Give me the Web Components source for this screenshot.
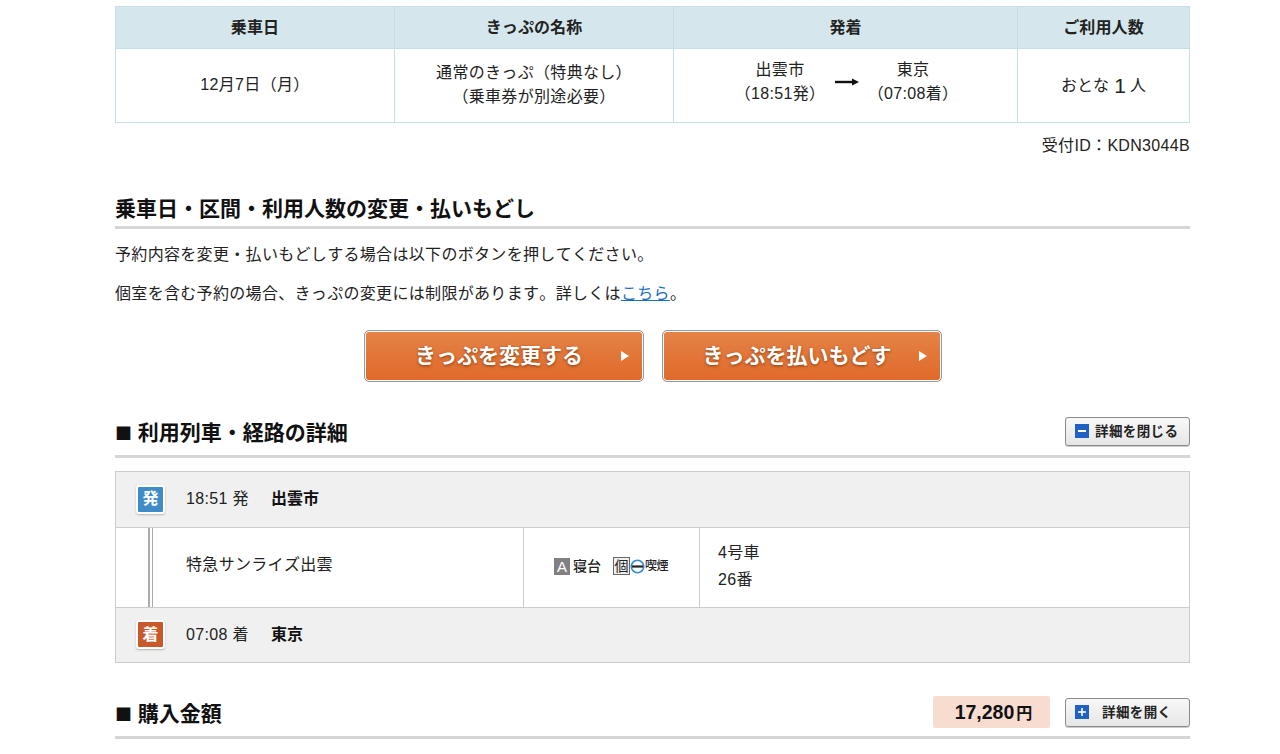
<!DOCTYPE html>
<html lang="ja"><head><meta charset="utf-8"><title>予約内容</title>
<style>
html,body{margin:0;background:#fff;overflow:hidden;height:754px}
body{font-family:"Liberation Sans","Noto Sans CJK JP",sans-serif;color:#222;font-size:16px;font-kerning:none;text-spacing-trim:space-all;letter-spacing:.32px}
</style></head><body>
<rsv-page></rsv-page>
<script>
const FONT='"Liberation Sans","Noto Sans CJK JP",sans-serif';
function el(name,html,css){customElements.define(name,class extends HTMLElement{constructor(){super();this.attachShadow({mode:'open'}).innerHTML=`<style>${css}</style>${typeof html==='function'?html(this):html}`;}
connectedCallback(){if(typeof html==='function'){this.shadowRoot.innerHTML=`<style>${css}</style>${html(this)}`}}});}

el('summary-table',`
<div class="g">
<div class="h">乗車日</div><div class="h">きっぷの名称</div><div class="h">発着</div><div class="h">ご利用人数</div>
<div class="c">12月7日（月）</div>
<div class="c">通常のきっぷ（特典なし）<br>（乗車券が別途必要）</div>
<div class="c route"><div>出雲市<br>（18:51発）</div>
<svg width="24" height="10" viewBox="0 0 24 10"><path d="M0 5H18" stroke="#111" stroke-width="2.4"/><path d="M17 1.5L24 5L17 8.5Z" fill="#111"/></svg>
<div>東京<br>（07:08着）</div></div>
<div class="c ppl">おとな<b>1</b>人</div>
</div>`,`
:host{display:block}
.g{display:grid;grid-template-columns:279px 279px 344px 1fr;grid-template-rows:42px 74px;border:1px solid #c5dfe6;box-sizing:border-box;height:117px}
.h,.c{display:flex;align-items:center;justify-content:center;text-align:center;border-right:1px solid #c5dfe6;box-sizing:border-box}
.g>:nth-child(4n){border-right:0}
.h{background:#d5e7ec;font-weight:700;border-bottom:1px solid #c5dfe6;font-size:16px;color:#222;padding-bottom:4px;letter-spacing:.1px}
.c{line-height:24px;font-size:16px;padding-bottom:2px}
.route{justify-content:flex-start;padding-left:56px;padding-bottom:9px}
.route svg{margin:0 4px 0 5px;flex:none;position:relative;top:0}
.route div{width:100px;white-space:nowrap;display:block}
.ppl{padding-bottom:1px;letter-spacing:.1px}
.ppl b{font-weight:400;font-size:21px;margin:0 4px 0 5px;line-height:20px}
`);

el('section-head',`<div class="w"><div class="t"><slot></slot></div><div class="r"><slot name="right"></slot></div></div>`,`
:host{display:block;border-bottom:3px solid #d6d6d6}
.w{display:flex;align-items:center;justify-content:space-between;height:100%}
:host(.pad) .w{padding-bottom:3px;box-sizing:border-box}
:host(.pad) .r{position:relative;top:-2px}
.t{font-size:21px;font-weight:700;color:#111;line-height:30px;white-space:nowrap;letter-spacing:0;position:relative;top:1px}
:host(.pad) .t{top:0}
.r{display:flex;align-items:center;gap:15px}
`);

el('order-button',`<button><span><slot></slot></span><i></i></button>`,`
:host{display:block}
button{display:flex;align-items:center;justify-content:center;position:relative;width:280px;height:52px;box-sizing:border-box;border:1px solid #999;outline:0;border-radius:5px;padding:0 0 4px;background:linear-gradient(#e48346,#e1692a);box-shadow:inset 0 0 0 1px #fff;color:#fff;font:700 21px ${FONT};font-kerning:none;letter-spacing:0;text-shadow:0 1px 3px rgba(90,40,0,.7);}
span{margin-right:10px}
i{position:absolute;right:14px;top:20px;border-left:8px solid #fff;border-top:5px solid transparent;border-bottom:5px solid transparent}
`);

el('toggle-button',h=>`<div class="b"><svg width="14" height="14" viewBox="0 0 14 14"><rect width="14" height="14" fill="#1f62c4"/><path d="M3 7H11" stroke="#fff" stroke-width="${h.hasAttribute('plus')?1.6:2}"/>${h.hasAttribute('plus')?'<path d="M7 3V11" stroke="#fff" stroke-width="1.6"/>':''}</svg><span><slot></slot></span></div>`,`
:host{display:block}
.b{width:125px;height:29px;box-sizing:border-box;border:1px solid #8a8a8a;border-radius:3px;background:linear-gradient(#f8f8f8,#e6e6e6);display:flex;align-items:center;padding-left:9px;font-size:13.5px;font-weight:700;color:#222;box-shadow:0 1px 0 #ccc}
span{margin-left:6px;letter-spacing:.4px;white-space:nowrap;line-height:1;position:relative;top:1px}
:host([plus]) span{margin-left:13px}
`);

el('stop-row',h=>`<div class="r"><div class="bd" style="background:${h.getAttribute('color')}">${h.getAttribute('mark')}</div><div class="time">${h.getAttribute('time')} <span>${h.getAttribute('mark')}</span></div><div class="st"><slot></slot></div></div>`,`
:host{display:block}
.r{display:flex;align-items:center;height:55px;background:#f0f0f0;box-sizing:border-box;padding-left:20px;padding-bottom:5px}
:host([last]) .r{height:54px}
.bd{width:25px;height:25px;border:2px solid #fff;border-radius:3px;box-shadow:0 1px 2px rgba(0,0,0,.25);color:#fff;font-weight:700;font-size:16px;letter-spacing:0;display:flex;align-items:center;justify-content:center;line-height:1;flex:none;box-sizing:content-box;position:relative;top:2px}
.time{margin-left:21px;width:85px;font-size:16px;white-space:nowrap}
.st{font-weight:700;font-size:16px;color:#111;letter-spacing:0}
`);

el('train-row',`<div class="r"><div class="line"></div><div class="name">特急サンライズ出雲</div>
<div class="cls"><span class="a">A</span><span class="t">寝台</span><span class="k">個</span>
<svg width="15" height="15" viewBox="0 0 15 15"><circle cx="7.5" cy="7.5" r="6.2" fill="#fff" stroke="#2f8ad0" stroke-width="1.6"/><path d="M2 7.5H13" stroke="#222" stroke-width="2.2"/></svg><span class="s">喫煙</span></div>
<div class="seat">4号車<br>26番</div></div>`,`
:host{display:block}
.r{display:grid;grid-template-columns:407px 177px 1fr;height:81px;border-top:1px solid #ccc;border-bottom:1px solid #ccc;box-sizing:border-box;position:relative;background:#fff}
.line{position:absolute;left:32px;top:0;bottom:0;width:5px;box-sizing:border-box;border-left:2px solid #aaa;border-right:1px solid #aaa;}
.name{padding:26px 0 0 70px;font-size:16px;line-height:22px;white-space:nowrap}
.cls{border-left:1px solid #ccc;border-right:1px solid #ccc;display:flex;align-items:center;padding:0 0 3px 30px;font-size:14px;line-height:1;white-space:nowrap;letter-spacing:0}
.a{background:#808080;color:#fff;width:16px;height:17px;display:flex;align-items:center;justify-content:center;font:15px "Liberation Sans"}
.t{margin-left:3px;margin-right:12px;font-weight:500}
.k{width:15px;height:16px;border:1px solid #666;display:flex;align-items:center;justify-content:center;font-size:14px;background:#f0f0f0;box-sizing:content-box}
.s{font-size:12px;font-weight:500;letter-spacing:-.5px}
.seat{padding:11px 0 0 18px;font-size:16px;line-height:27px}
`);

el('rsv-page',`
<div class="p">
<summary-table></summary-table>
<div class="id">受付ID：KDN3044B</div>
<section-head class="s1">乗車日・区間・利用人数の変更・払いもどし</section-head>
<p class="p1">予約内容を変更・払いもどしする場合は以下のボタンを押してください。</p>
<p class="p2">個室を含む予約の場合、きっぷの変更には制限があります。詳しくは<a>こちら</a>。</p>
<div class="btns"><order-button>きっぷを変更する</order-button><order-button>きっぷを払いもどす</order-button></div>
<section-head class="s2 pad"><span class="sq">■</span> 利用列車・経路の詳細<toggle-button slot="right">詳細を閉じる</toggle-button></section-head>
<div class="box">
<stop-row mark="発" color="#3f8cc6" time="18:51">出雲市</stop-row>
<train-row></train-row>
<stop-row last mark="着" color="#c9592a" time="07:08">東京</stop-row>
</div>
<section-head class="s3 pad"><span class="sq">■</span> 購入金額<span slot="right" class="price">17,280<small>円</small></span><toggle-button slot="right" plus>詳細を開く</toggle-button></section-head>
</div>`,`
:host{display:block}
.p{width:1075px;margin-left:115px;padding-top:6px}
.id{text-align:right;font-size:16px;line-height:22px;margin-top:12px}
.s1{margin-top:33px;height:36px;}
p{margin:0;font-size:16px;line-height:24px}
.p1{margin-top:14px}.p2{margin-top:15px}
a{color:#1a6fc0;text-decoration:underline}
.btns{display:flex;justify-content:center;gap:18px;margin-top:24px;padding-left:1px}
.s2{margin-top:32px;height:44px;box-sizing:border-box}
.sq{font-size:17px;font-family:"Noto Sans CJK JP",sans-serif}
.box{margin-top:13px;border:1px solid #ccc;height:192px;box-sizing:border-box}
.s3{margin-top:32px;height:44px;box-sizing:border-box}
.price{width:117px;height:32px;background:#f8dccf;border-radius:2px;display:flex;align-items:center;justify-content:center;font-size:19.5px;font-weight:700;color:#111;letter-spacing:0;box-sizing:border-box;padding-left:4px}
small{font-size:16px;margin-left:2px}
`);
</script>
</body></html>
